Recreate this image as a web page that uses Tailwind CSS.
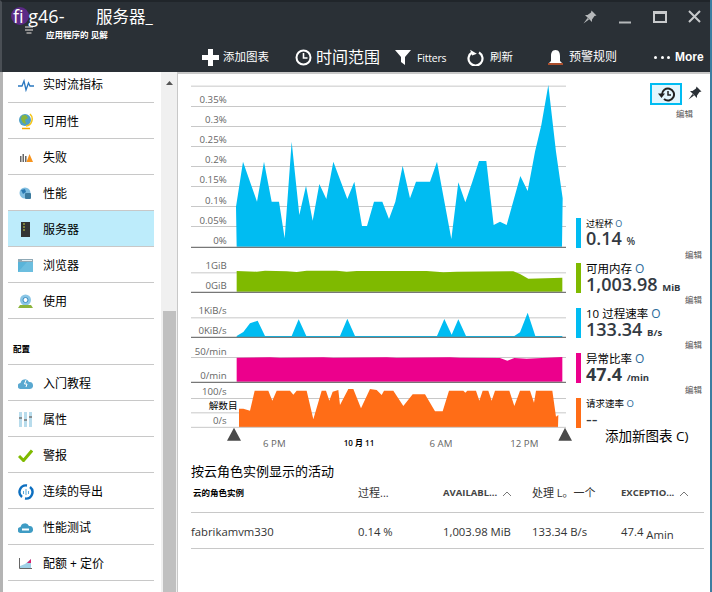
<!DOCTYPE html>
<html lang="zh-CN">
<head>
  <meta charset="UTF-8">
  <title>服务器</title>
  <meta name="viewport" content="width=device-width, initial-scale=1">
  <script src="https://cdn.jsdelivr.net/npm/@tailwindcss/browser@4"></script>
</head>
<body class="bg-white overflow-hidden font-['Open_Sans','Noto_Sans_CJK_SC',sans-serif]">
<div class="w-[712px] h-[592px] flex flex-col overflow-hidden border-r-2 border-[#3b7ea1]">

  <!-- header -->
  <header class="h-[72px] shrink-0 bg-[#2a3036] border-t-2 border-t-[#20252a] border-l-2 border-l-[#4a4f55] text-white relative">
    <div class="h-[42px] flex justify-between pl-[11px] pr-[9px]">
      <div class="relative pt-[1px]">
        <span class="absolute left-[-2px] top-[5px] w-[18px] h-[18px] rounded-full bg-[#5b2a86]"></span>
        <svg class="absolute left-[10px] top-[24px]" width="12" height="12" viewBox="0 0 12 12"><path d="M2 1h8M2 4h8M3.500 7h5" stroke="#8c8c8c" stroke-width="2"/></svg>
        <div class="relative flex items-baseline h-[26px]">
          <span class="text-[18px] leading-[26px] w-[83px]">fi g46-</span>
          <span class="text-[16.500px] leading-[26px]">服务器_</span>
        </div>
        <div class="relative pl-[33px] text-[8.500px] font-bold leading-[12px]">应用程序的 见解</div>
      </div>
      <div class="flex items-start gap-[21px] pt-[8px]">
        <svg width="14" height="14" viewBox="0 0 14 14"><path d="M8.500 0.500 13.500 5.500 11.500 6 9 9.500 9 12 2 5 4.500 5 8 2.500Z M4.500 8 0.500 13.500 6 9.500Z" fill="#b5b8ba"/></svg>
        <svg width="14" height="14" viewBox="0 0 14 14"><path d="M1 12.500h12" stroke="#b5b8ba" stroke-width="2"/></svg>
        <svg width="14" height="13" viewBox="0 0 14 13"><path d="M1 2h12v10H1z" fill="none" stroke="#c8cacc" stroke-width="2"/><path d="M1 2.500h12" stroke="#c8cacc" stroke-width="3"/></svg>
        <svg width="13" height="13" viewBox="0 0 13 13"><path d="M1 1 12 12M12 1 1 12" stroke="#c8cacc" stroke-width="2"/></svg>
      </div>
    </div>
    <div class="h-[26px] flex items-center pl-[200px] text-[11.500px]">
      <svg width="17" height="17" viewBox="0 0 17 17" class="mr-[4px]"><path d="M6 0h5v6h6v5h-6v6H6v-6H0V6h6z" fill="#fff"/></svg>
      <span class="w-[72px]">添加图表</span>
      <svg width="17" height="17" viewBox="0 0 17 17" class="mr-[4px]"><circle cx="8.500" cy="8.500" r="7" fill="none" stroke="#fff" stroke-width="2"/><path d="M8.500 4v5h4" fill="none" stroke="#fff" stroke-width="1.600"/></svg>
      <span class="text-[16px] w-[79px]">时间范围</span>
      <svg width="16" height="16" viewBox="0 0 16 16" class="mr-[6px]"><path d="M0 1h16L10 8v8L6 13V8z" fill="#fff"/></svg>
      <span class="text-[10.500px] w-[50px] pt-[3px] tracking-[-0.2px]">Fitters</span>
      <svg width="17" height="17" viewBox="0 0 17 17" class="mr-[6px]"><path d="M5 3.500A7 7 0 1 0 12 3.500" fill="none" stroke="#fff" stroke-width="2.200"/><path d="M4 0v6h5z" fill="#fff" transform="rotate(-20 6 3)"/></svg>
      <span class="w-[58px]">刷新</span>
      <svg width="15" height="17" viewBox="0 0 15 17" class="mr-[6px]"><path d="M7.500 1C11 1 12 4 12 7v5l2 2H1l2-2V7C3 4 4 1 7.500 1z" fill="#fff"/><path d="M0 15h15" stroke="#d8592a" stroke-width="1.500"/></svg>
      <span class="w-[85px] text-[12px]">预警规则</span>
      <span class="flex gap-[3.500px] w-[21px]"><i class="w-[3px] h-[3px] rounded-full bg-white"></i><i class="w-[3px] h-[3px] rounded-full bg-white"></i><i class="w-[3px] h-[3px] rounded-full bg-white"></i></span>
      <span class="font-['Liberation_Sans'] font-bold text-[12px]">More</span>
    </div>
  </header>

  <div class="flex-1 flex min-h-0">
    <!-- sidebar -->
    <nav class="w-[161px] shrink-0 border-l-[3px] border-[#b4b4b4] pt-[2px] pl-[5px] pr-[7px] text-[12px] text-black">
      <ul>
        <li class="h-[29px] flex items-center border-b border-[#c8c8c8] pb-[6px]">
          <span class="w-[35px] flex justify-center"><svg width="16" height="14" viewBox="0 0 16 14"><path d="M0 8h4l2-5 2 9 2.500-7 1.500 3h4" fill="none" stroke="#2a78c0" stroke-width="1.300"/></svg></span>实时流指标
        </li>
        <li class="h-[36px] pt-[2px] flex items-center border-b border-[#c8c8c8]">
          <span class="w-[35px] flex justify-center"><svg width="16" height="17" viewBox="0 0 16 17"><circle cx="7" cy="7" r="6" fill="#4fa0c8"/><path d="M4 2.500 8 2 10 5 7 7 8 11 5 10 3 6z" fill="#8ab53a"/><path d="M12 1a7 7 0 0 1-4 12" fill="none" stroke="#f5c518" stroke-width="1.500"/><path d="M4 15.500h8" stroke="#f5a800" stroke-width="1.500"/></svg></span>可用性
        </li>
        <li class="h-[36px] pt-[2px] flex items-center border-b border-[#c8c8c8]">
          <span class="w-[35px] flex justify-center"><svg width="14" height="10" viewBox="0 0 14 10"><path d="M1 3h1.500v6H1zM3.500 1H5v8H3.500zM6 3h1.500v6H6z" fill="#666"/><path d="M10.500 1 14 9H7.500z" fill="#f7941e"/></svg></span>失败
        </li>
        <li class="h-[36px] pt-[2px] flex items-center border-b border-[#c8c8c8]">
          <span class="w-[35px] flex justify-center"><svg width="13" height="13" viewBox="0 0 13 13"><circle cx="6" cy="6" r="5.500" fill="#7fbde0"/><path d="M2 3 6 2 7 5 4 7z" fill="#2a78b0"/><rect x="6" y="6" width="6" height="6" rx="1" fill="#3b7a9e"/></svg></span>性能
        </li>
        <li class="h-[36px] pt-[2px] flex items-center border-b border-[#c8c8c8] bg-[#bdecfb]">
          <span class="w-[35px] flex justify-center"><svg width="9" height="15" viewBox="0 0 9 15"><rect width="9" height="15" fill="#333"/><path d="M2 2h2M2 5h2M2 8h2" stroke="#c8d040"/></svg></span>服务器
        </li>
        <li class="h-[36px] pt-[2px] flex items-center border-b border-[#c8c8c8]">
          <span class="w-[35px] flex justify-center"><svg width="15" height="13" viewBox="0 0 15 13"><rect width="15" height="13" fill="#59b4d9"/><path d="M0 0h15v3H0z" fill="#8fa9b6"/><path d="M4 1.500h10" stroke="#e8eef0"/><path d="M0 13 9 3h6v10z" fill="#7fc8e6" opacity=".5"/></svg></span>浏览器
        </li>
        <li class="h-[36px] pt-[2px] flex items-center border-b border-[#c8c8c8]">
          <span class="w-[35px] flex justify-center"><svg width="15" height="15" viewBox="0 0 15 15"><circle cx="7.500" cy="6" r="5.500" fill="#8ac6e6"/><circle cx="7.500" cy="6" r="2.500" fill="#fff" stroke="#3a8cc0"/><path d="M2 11h11l2 3H0z" fill="#8cb43c"/></svg></span>使用
        </li>
      </ul>
      <div class="h-[46px] flex items-end pb-[8px] pl-[5px] text-[8.500px] font-bold border-b border-[#c8c8c8]">配置</div>
      <ul>
        <li class="h-[36px] pt-[2px] flex items-center border-b border-[#c8c8c8]">
          <span class="w-[35px] flex justify-center"><svg width="15" height="10" viewBox="0 0 15 10"><path d="M3 10a3 3 0 0 1-.5-6A4.500 4.500 0 0 1 11 3a3.500 3.500 0 0 1 1 7z" fill="#59a8d0"/><path d="M8 1 6.500 5H9L8 8" fill="none" stroke="#fff"/></svg></span>入门教程
        </li>
        <li class="h-[36px] pt-[2px] flex items-center border-b border-[#c8c8c8]">
          <span class="w-[35px] flex justify-center"><svg width="13" height="15" viewBox="0 0 13 15"><path d="M0 0h3v15H0zM5 0h3v15H5zM10 0h3v15h-3z" fill="#b8dcec"/><path d="M0 6h3M5 8h3M10 5h3" stroke="#777" stroke-width="1.500"/></svg></span>属性
        </li>
        <li class="h-[36px] pt-[2px] flex items-center border-b border-[#c8c8c8]">
          <span class="w-[35px] flex justify-center"><svg width="15" height="13" viewBox="0 0 15 13"><path d="M1 7 5.500 11.500 14 1.500" fill="none" stroke="#7fba00" stroke-width="3"/></svg></span>警报
        </li>
        <li class="h-[36px] pt-[2px] flex items-center border-b border-[#c8c8c8]">
          <span class="w-[35px] flex justify-center"><svg width="16" height="16" viewBox="0 0 16 16"><path d="M9 1.500A6.500 6.500 0 0 0 4 13M7 14.500A6.500 6.500 0 0 0 12 3" fill="none" stroke="#0d6fc0" stroke-width="2.400"/><path d="M5.500 7v3M8 5v6M10.500 7v3" stroke="#59a8d9"/></svg></span>连续的导出
        </li>
        <li class="h-[36px] pt-[2px] flex items-center border-b border-[#c8c8c8]">
          <span class="w-[35px] flex justify-center"><svg width="15" height="10" viewBox="0 0 15 10"><path d="M3 10a3 3 0 0 1-.5-6A4.500 4.500 0 0 1 11 3a3.500 3.500 0 0 1 1 7z" fill="#3f9cc4"/><path d="M4 6.500h7" stroke="#fff" stroke-width="2"/></svg></span>性能测试
        </li>
        <li class="h-[36px] pt-[2px] flex items-center border-b border-[#c8c8c8]">
          <span class="w-[35px] flex justify-center"><svg width="13" height="11" viewBox="0 0 13 11"><path d="M.5 0v10.500H13" fill="none" stroke="#666"/><path d="M1 10V8l5-2 6-5v9z" fill="#9fd0e6"/><path d="M8 5 12 1v4z" fill="#d6226e"/></svg></span>配额 + 定价
        </li>
      </ul>
    </nav>

    <!-- scrollbar -->
    <div class="w-[17px] shrink-0 bg-[#f0f0f0] border-r border-[#c8c8c8] flex flex-col justify-between pl-[2px]">
      <svg width="13" height="8" viewBox="0 0 13 8" class="mt-[7px] shrink-0"><path d="M6.500 2 10 6H3z" fill="#555"/></svg>
      <div class="h-[281px] w-[13px] bg-[#c0c0c0]"></div>
    </div>

    <!-- main -->
    <main class="flex-1 min-w-0 flex flex-col border-t-2 border-[#c8c8c8]">
      <div class="h-[388px] mt-[1px] flex relative">
        <svg width="400" height="385" viewBox="0 0 1200 1155" class="shrink-0 ml-[2px]" font-size="29" fill="#666" text-anchor="end">
          <path d="M33 33.500H1158M33 94.500H1158M33 154.500H1158M33 214.500H1158M33 274.500H1158M33 334.500H1158M33 394.500H1158M33 454.500H1158" stroke="#c8c8c8" stroke-width="3"/>
          <polygon fill="#00bcf2" points="168,395 189,260 210,320 231,380 252,260 275,380 297,380 314,490 335,200 358,420 378,332 398,437 418,327 439,372 460,260 502,372 523,320 546,453 561,453 582,380 607,380 627,432 646,380 668,272 690,370 708,320 750,320 771,260 814,492 835,322 856,382 877,320 897,258 919,258 941,450 960,440 980,450 1021,303 1043,348 1065,230 1084,150 1105,30 1128,230 1148,370 1146,515 170,515"/>
          <path d="M33 517H1158" stroke="#777" stroke-width="4"/>
          <text x="140" y="85">0.35%</text><text x="140" y="144">0.3%</text><text x="140" y="204">0.25%</text><text x="140" y="264">0.2%</text><text x="140" y="324">0.15%</text><text x="140" y="387">0.1%</text><text x="140" y="447">0.05%</text><text x="140" y="507">0%</text>

          <g transform="translate(0 525)">
            <path d="M33 68.500H1158" stroke="#c8c8c8" stroke-width="3"/>
            <polygon fill="#7fba00" points="170,63 230,65 255,62 320,64 350,66 380,62 470,62 500,65 530,63 740,63 790,67 830,65 1000,64 1020,72 1045,86 1147,83 1147,125 170,125"/>
            <path d="M33 127H1158" stroke="#777" stroke-width="4"/>
            <text x="140" y="57">1GiB</text><text x="140" y="117">0GiB</text>

            <path d="M33 203.500H1158" stroke="#c8c8c8" stroke-width="3"/>
            <polygon fill="#00bcf2" points="170,258 190,246 210,220 233,212 255,258 335,258 356,208 379,258 480,258 502,206 525,258 771,258 793,207 815,254 835,208 858,258 1003,258 1020,247 1043,188 1066,258 1147,258 1147,261 170,261"/>
            <path d="M33 262H1158" stroke="#777" stroke-width="4"/>
            <text x="140" y="192">1KiB/s</text><text x="140" y="252">0KiB/s</text>

            <path d="M33 322.500H1158" stroke="#c8c8c8" stroke-width="3"/>
            <polygon fill="#ec008c" points="170,323 270,322 300,323 430,322 460,323 620,322 650,323 810,322 840,323 960,324 982,332 1003,324 1040,326 1147,321 1147,395 170,395"/>
            <path d="M33 397H1158" stroke="#777" stroke-width="4"/>
            <text x="140" y="315">50/min</text><text x="140" y="387">0/min</text>

            <path d="M33 445.500H1158M33 488.500H1158" stroke="#c8c8c8" stroke-width="3"/>
            <polygon fill="#ff6d17" points="177,532 177,476 190,476 210,482 224,422 265,422 277,452 290,422 330,422 340,434 350,422 380,422 400,508 425,422 438,422 448,452 458,425 475,420 480,465 505,417 520,417 543,475 570,417 590,420 605,435 612,422 640,422 670,468 698,433 735,433 765,484 788,484 807,422 850,422 856,428 862,422 888,422 898,452 908,422 925,422 935,452 945,422 988,422 1003,468 1020,422 1050,422 1062,458 1068,422 1117,422 1128,500 1135,495 1134,532"/>
            <path d="M33 532H1158" stroke="#c8c8c8" stroke-width="3"/>
            <text x="140" y="435">100/s</text><text x="140" y="522">0/s</text>
            <text x="173" y="477" fill="#000" font-size="29">解数目</text>
            <path d="M141 572 162 533 183 572ZM1135 572 1155 533 1176 572Z" fill="#4a4a4a"/>
            <g text-anchor="middle" font-size="29">
              <text x="283" y="590">6 PM</text><text x="783" y="590">6 AM</text><text x="1033" y="590">12 PM</text>
              <text x="537" y="588" fill="#000" font-size="24" font-weight="600">10 月 11</text>
            </g>
          </g>
        </svg>

        <!-- legends -->
        <div class="absolute right-0 top-0 w-[132px] h-full">
          <div class="absolute top-[8px] left-[72px] flex items-start gap-[6px]">
            <span class="w-[32px] h-[22px] bg-[#e3f6fd] border-2 border-[#00bcf2] flex items-center justify-center"><svg width="17" height="15" viewBox="0 0 17 15"><path d="M4 7.500A6 6 0 1 1 6 12" fill="none" stroke="#222" stroke-width="2"/><path d="M0 6.500h7L3.500 11z" fill="#222"/><path d="M10 4v4h3" fill="none" stroke="#222" stroke-width="1.500"/></svg></span>
            <svg width="14" height="14" viewBox="0 0 14 14" class="mt-[3px]"><path d="M8.500 0.500 13.500 5.500 11.500 6 9 9.500 9 12 2 5 4.500 5 8 2.500Z M4.500 8 0.500 13.500 6 9.500Z" fill="#2a3036"/></svg>
          </div>
          <span class="absolute left-[98px] top-[33px] text-[8.500px] text-[#555]">编辑</span>
          <span class="absolute left-[107px] top-[174px] text-[8.500px] text-[#555]">编辑</span>
          <span class="absolute left-[107px] top-[219px] text-[8.500px] text-[#555]">编辑</span>
          <span class="absolute left-[107px] top-[264px] text-[8.500px] text-[#555]">编辑</span>
          <span class="absolute left-[107px] top-[309px] text-[8.500px] text-[#555]">编辑</span>
        </div>
        <div class="absolute left-[398px] top-[143px] w-[132px] flex flex-col gap-[15px] text-[#333a42]">
          <div class="h-[30px] flex gap-[5px]">
            <span class="w-[5px] bg-[#00bcf2]"></span>
            <div><div class="text-[9px] leading-[11px] text-black">过程杯 <span class="text-[#2a6a9a]">O</span></div><div class="text-[18px] leading-[19px] font-semibold">0.14 <span class="text-[10px]">%</span></div></div>
          </div>
          <div class="h-[30px] flex gap-[5px]">
            <span class="w-[5px] bg-[#7fba00]"></span>
            <div><div class="text-[11.500px] leading-[11px] text-black">可用内存 <span class="text-[#2a6a9a] text-[12px]">O</span></div><div class="text-[18px] leading-[20px] font-semibold whitespace-nowrap">1,003.98 <span class="text-[9.500px] font-bold">MiB</span></div></div>
          </div>
          <div class="h-[30px] flex gap-[5px]">
            <span class="w-[5px] bg-[#00bcf2]"></span>
            <div><div class="text-[11.500px] leading-[11px] text-black">10 过程速率 <span class="text-[#2a6a9a] text-[12px]">O</span></div><div class="text-[18px] leading-[20px] font-semibold whitespace-nowrap">133.34 <span class="text-[9.500px] font-bold">B/s</span></div></div>
          </div>
          <div class="h-[30px] flex gap-[5px]">
            <span class="w-[5px] bg-[#ec008c]"></span>
            <div><div class="text-[11.500px] leading-[11px] text-black">异常比率 <span class="text-[#2a6a9a] text-[12px]">O</span></div><div class="text-[18px] leading-[20px] font-bold whitespace-nowrap">47.4 <span class="text-[9.500px] font-bold">/min</span></div></div>
          </div>
          <div class="h-[30px] flex gap-[5px] relative">
            <span class="w-[5px] bg-[#ff6d17]"></span>
            <div><div class="text-[9.500px] leading-[11px] text-black">请求速率 <span class="text-[#2a6a9a]">O</span></div><div class="text-[18px] leading-[20px] font-medium">--</div></div>
            <span class="absolute left-[29px] top-[29px] text-[13.500px] leading-[18px] text-black whitespace-nowrap">添加新图表 C)</span>
          </div>
        </div>
      </div>

      <!-- table -->
      <section class="pl-[13px] pr-[6px] text-[#333]">
        <h2 class="text-[13px] leading-[18px] text-black -mt-[1px]">按云角色实例显示的活动</h2>
        <div class="h-[33px] grid grid-cols-[167px_85px_89px_89px_1fr] items-center border-b border-[#c8c8c8] pt-[1px] pb-[6px]">
          <span class="text-[8.500px] font-bold text-black pl-[2px]">云的角色实例</span>
          <span class="text-[11px]">过程...</span>
          <span class="text-[9.500px] font-bold text-[#444] whitespace-nowrap flex items-center gap-[5px]">AVAILABL... <svg width="10" height="6" viewBox="0 0 10 6"><path d="M1 5 5 1l4 4" fill="none" stroke="#777"/></svg></span>
          <span class="text-[11px] whitespace-nowrap">处理 L。一个</span>
          <span class="text-[9.500px] font-bold text-[#444] whitespace-nowrap flex items-center gap-[5px]">EXCEPTIO... <svg width="10" height="6" viewBox="0 0 10 6"><path d="M1 5 5 1l4 4" fill="none" stroke="#777"/></svg></span>
        </div>
        <div class="h-[36px] grid grid-cols-[167px_85px_89px_89px_1fr] items-center border-b border-[#c8c8c8] pt-[4px] text-[11.300px]">
          <span>fabrikamvm330</span>
          <span>0.14 %</span>
          <span>1,003.98 MiB</span>
          <span>133.34 B/s</span>
          <span>47.4 <span class="relative top-[3px]">Amin</span></span>
        </div>
      </section>
    </main>
  </div>
</div>
</body>
</html>
